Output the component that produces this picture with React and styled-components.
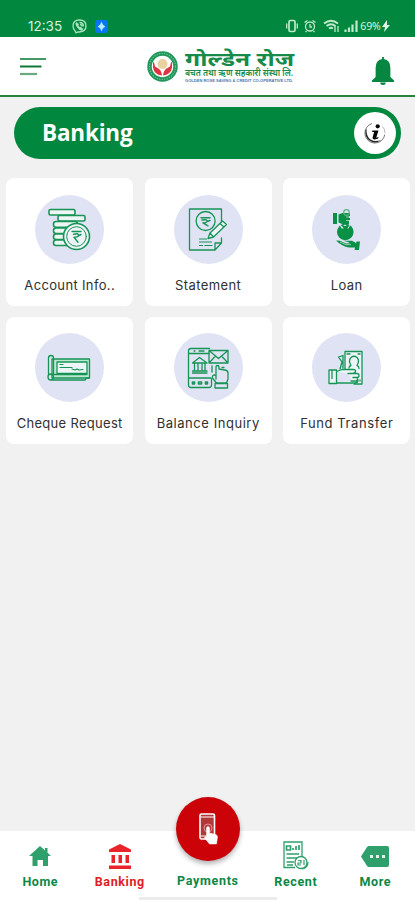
import React from 'react';
import styled, { createGlobalStyle } from 'styled-components';

const GREEN = '#02873f';
const NAV_GREEN = '#2fa06c';

const GlobalStyle = createGlobalStyle`
  * { box-sizing: border-box; }
  body { margin: 0; background: #f1f1f1; }
`;

const Screen = styled.div`
  width: 415px;
  height: 900px;
  display: flex;
  flex-direction: column;
  overflow: hidden;
  background: #f1f1f1;
  font-family: Inter, "Noto Sans", sans-serif;
`;

const StatusBar = styled.div`
  height: 37px;
  flex: none;
  display: flex;
  justify-content: space-between;
  padding: 16px 25px 0 28px;
  background: ${GREEN};
  color: #d9f3df;
`;

const StatusGroup = styled.div`
  display: flex;
  align-items: center;
  height: 20px;
  gap: ${(p) => p.$gap}px;
`;

const Clock = styled.span`
  width: 36px;
  font-size: 13.5px;
  letter-spacing: 0;
  white-space: nowrap;
`;

const Battery = styled.span`
  font-family: "Noto Sans", sans-serif;
  font-size: 10.5px;
  letter-spacing: -0.2px;
`;

const Header = styled.header`
  height: 60px;
  flex: none;
  display: flex;
  align-items: flex-start;
  background: #fff;
  border-bottom: 2px solid #2b8240;
`;

const MenuIcon = styled.svg`
  margin: 19px 0 0 20px;
`;

const Logo = styled.svg`
  margin: 11px 0 0 99px;
`;

const BellIcon = styled.svg`
  margin: 19px 0 0 73px;
`;

const TitlePill = styled.div`
  height: 52px;
  flex: none;
  margin: 10px 14px 0;
  padding: 0 5px 0 28px;
  display: flex;
  align-items: center;
  justify-content: space-between;
  border-radius: 26px;
  background: ${GREEN};
`;

const Title = styled.h1`
  margin: -2px 0 0;
  color: #fff;
  font-family: "Open Sans", sans-serif;
  font-size: 22.5px;
  font-weight: 700;
  letter-spacing: -0.2px;
`;

const InfoButton = styled.div`
  width: 42px;
  height: 42px;
  display: flex;
  align-items: center;
  justify-content: center;
  border-radius: 50%;
  background: #fff;
`;

const CardGrid = styled.main`
  flex: 1;
  display: grid;
  grid-template-columns: repeat(3, 127px);
  grid-auto-rows: 127.5px;
  gap: 11px 11.5px;
  padding: 19px 0 0 6px;
`;

const Card = styled.div`
  display: flex;
  flex-direction: column;
  align-items: center;
  padding-top: ${(p) => p.$top}px;
  border-radius: 8px;
  background: #fff;
`;

const IconDisc = styled.div`
  width: 69px;
  height: 69px;
  flex: none;
  border-radius: 50%;
  background: #e0e3f4;
`;

const CardLabel = styled.div`
  margin-top: 12.5px;
  line-height: 16px;
  color: #303030;
  font-size: 13px;
  letter-spacing: ${(p) => p.$spacing}px;
  margin-right: -${(p) => p.$spacing}px;
  white-space: nowrap;
`;

const NavBar = styled.nav`
  height: 69.5px;
  flex: none;
  display: grid;
  grid-template-columns: 80px 79px 97px 79px 80px;
  position: relative;
  background: #fff;
`;

const NavItem = styled.div`
  display: flex;
  flex-direction: column;
  align-items: center;
  padding-top: 8.5px;
  color: ${(p) => p.$color};
`;

const NavIconBox = styled.div`
  width: 32px;
  height: 34px;
  display: flex;
  align-items: center;
  justify-content: center;
`;

const NavLabel = styled.span`
  margin-top: 1px;
  line-height: 16px;
  font-family: Roboto, sans-serif;
  font-size: 12.5px;
  font-weight: 700;
  letter-spacing: ${(p) => p.$spacing || 0.5}px;
  margin-right: -${(p) => p.$spacing || 0.5}px;
  color: ${(p) => p.$color || '#0c8746'};
`;

const PayButton = styled.div`
  width: 64px;
  height: 64px;
  flex: none;
  margin-top: -42px;
  margin-bottom: 11px;
  display: flex;
  align-items: center;
  justify-content: center;
  border-radius: 50%;
  background: #cb0208;
  box-shadow: 0 3px 5px rgba(0, 0, 0, 0.3);
`;

const GestureBar = styled.div`
  position: absolute;
  left: 139px;
  bottom: 0;
  width: 138px;
  height: 3px;
  background: #ececec;
`;

const Line = ({ children, width = 1.3 }) => (
  <svg width="69" height="69" viewBox="0 0 69 69" fill="none" stroke="#169456"
    strokeWidth={width} strokeLinecap="round" strokeLinejoin="round">
    {children}
  </svg>
);

const AccountIcon = () => (
  <Line width={1.6}>
    <rect x="14" y="14.5" width="26" height="5.5" rx="1.5" fill="#eef5f5" />
    <rect x="23" y="20.5" width="27" height="5.5" rx="1.5" fill="#eef5f5" />
    <rect x="18.500" y="26.500" width="24" height="5.700" rx="2.500" fill="#eef5f5" />
    <rect x="18.500" y="33" width="18" height="5.500" rx="2.500" fill="#eef5f5" />
    <rect x="18.500" y="39" width="18" height="5.500" rx="2.500" fill="#eef5f5" />
    <rect x="18.500" y="45" width="18" height="5.500" rx="2.500" fill="#eef5f5" />
    <circle cx="41.5" cy="41.500" r="13" fill="#eef3f8" />
    <circle cx="41.500" cy="41.500" r="9.800" strokeWidth="1" />
    <path d="M37 36.500h9M38.500 39.300q5-1.500 5 1q0 2-4.500 2l4 5M44 40.500l2-1" strokeWidth="1.400" />
  </Line>
);

const StatementIcon = () => (
  <Line>
    <path d="M47.500 43v5l-6.500 7H15.500V14h32v14M41 55v-7h6.500" />
    <circle cx="31.600" cy="26" r="9.500" />
    <path d="M27 22.800h9M28 25q6-1 5 1.500q-1 1.800-4 1.300l5 3M33 26.500l3-1" strokeWidth="1.500" />
    <path d="M34 43.500l2-5.500L48.500 26l4 3.500L39.500 42zM36 38l3.500 4M46 28.500l4 3.500" fill="#eef3f8" />
    <path d="M25.500 44h7M25.500 47h12M25.500 50.500h3M31 50.500h7" strokeWidth="1.200" />
  </Line>
);

const LoanIcon = () => (
  <svg width="69" height="69" viewBox="0 0 69 69" fill="#089044">
    <path d="M21 18h4v11h-4zM26.500 19.500l4-1.500h7.500v3h-1v2h1v2h-1v4h-7l-3.500-1.500z" />
    <circle cx="34.500" cy="17.500" r="2.800" fill="none" stroke="#5bb283" strokeWidth="1.200" />
    <path d="M34 22h4M34 25.500h4" stroke="#d5ead9" strokeWidth="0.700" />
    <circle cx="33.300" cy="37" r="8.300" />
    <path d="M27.500 29.500l3 2 2.500-2 2.500 2 3-2-2 4h-7z" fill="#e0e3f4" />
    <path d="M30 31h7l-2 3h-3z" />
    <path d="M24 45.500l4 .2 6 2.800 4-.2-2-1.300-5-1.300h9l4 2.300-.5 4.500H37q-7-1-13-7zM44.500 46.500H48l-1 8.500h-4.500z" />
    <path d="M28 47l6 2.700h5" stroke="#e0e3f4" strokeWidth="0.700" fill="none" />
  </svg>
);

const ChequeIcon = () => (
  <Line>
    <path d="M17 26h37.500V45H17z" fill="#bce8d2" />
    <path d="M13.500 42V25q0-2.500 2.500-2.500t2.500 2.500v17M16 41.500h36M16 47q-3 0-3-3t3-3q2.500 0 2.500 3T16 47h34l1.500-2H54" />
    <rect x="22" y="29" width="30" height="11.500" fill="#edf5f7" />
    <path d="M25 31.500h3M25 34.500h12M37 36l3 1 2-1 2 1 4-.5" strokeWidth="1.200" />
  </Line>
);

const BalanceIcon = () => (
  <Line>
    <path d="M35.500 15.500H17q-2.500 0-2.500 2.500v34q0 2.500 2.500 2.500h18q2.500 0 2.500-2.500v-6M14.500 20.500H35M14.500 45H37M20 18h1M25 18h5" />
    <path d="M18.500 30l7-5.500 7.500 5.500zM20.500 31v6.500M24 31v6.500M28 31v6.500M31 31v6.500M18.500 38h14.500M18.500 40h14.500" />
    <path d="M18.500 49h2v2h-2zM24.500 49h3v2h-3zM31.500 49h2v2h-2z" strokeWidth="1.600" />
    <path d="M35 17.500h19V30H35zM35 17.500l9.500 8 9.500-8M35 30l6.500-7M54 30l-6.500-7" />
    <path d="M42 46V34q0-1.500 1.500-1.500T45 34v2l6 1q3 .5 3 3v6l-1.500 4h-10L38.500 45q-.5-3 2-3l1.500 1M41 50.500h12.500V55H41z" />
    <path d="M38 33v6M48 34.500h2" />
  </Line>
);

const FundIcon = () => (
  <Line>
    <path d="M33 36V18.500h17V51H42" fill="#edf4f8" />
    <path d="M31 35V22.500l-4.500 1.500 3.500 5-2 7M35 21h3M46 21h2M48 47v1" />
    <path d="M37 35q0-2 2-2.500-3-5 0-8 3-2.500 6 0 3 3 0 8 2 .5 2 3" />
    <path d="M17 37h7.500v13.500H17zM20 37.500v8M24.500 38.500L30 36.500h11q3 0 2.500 2t-3.500 2h-4M24.500 50H43q3 0 3-3M40 40.500h5q2 0 2 2t-2 2h-4M44 44.500q2 0 1.500 2T43 48h-4" fill="#edf4f8" />
  </Line>
);

const CARDS = [
  { label: 'Account Info..', Icon: AccountIcon, top: 17, spacing: 0.35 },
  { label: 'Statement', Icon: StatementIcon, top: 17, spacing: 0.4 },
  { label: 'Loan', Icon: LoanIcon, top: 17, spacing: 0.4 },
  { label: 'Cheque Request', Icon: ChequeIcon, top: 16.5, spacing: 0.3 },
  { label: 'Balance Inquiry', Icon: BalanceIcon, top: 16.5, spacing: 0.55 },
  { label: 'Fund Transfer', Icon: FundIcon, top: 16.5, spacing: 0.6 },
];

const BrandLogo = () => (
  <Logo width="151" height="38" viewBox="0 0 151 38">
    <circle cx="15.500" cy="18.500" r="13" fill="#fff" stroke="#20975a" strokeWidth="4.500" />
    <circle cx="15.500" cy="18.500" r="13" fill="none" stroke="#8bc9a5" strokeWidth="1.200" strokeDasharray="1 1.500" />
    <circle cx="15.500" cy="16" r="5" fill="#ecd1a0" />
    <path d="M6 13.500q1.500 1 2 5l3.500 2q3 2 3.500 7-8-1-9-8zM25 13.500q-1.500 1-2 5l-3.500 2q-3 2-3.500 7 8-1 9-8z" fill="#df3440" />
    <g fontFamily='"Noto Sans", "Noto Sans Devanagari", sans-serif' fill="#168b4a">
      <text x="38" y="17.500" fontSize="19" fontWeight="700" textLength="109" lengthAdjust="spacingAndGlyphs">गोल्डेन रोज</text>
      <text x="38" y="27.500" fontSize="9" fontWeight="600" textLength="108" lengthAdjust="spacingAndGlyphs">बचत तथा ऋण सहकारी संस्था लि.</text>
    </g>
    <text x="38" y="33.500" fontFamily='"Liberation Sans", sans-serif' fontSize="4.200" fontWeight="700" fill="#4b76ab" textLength="108" lengthAdjust="spacingAndGlyphs">GOLDEN ROSE SAVING &amp; CREDIT CO-OPERATIVE LTD.</text>
  </Logo>
);

export default function App() {
  return (
    <>
      <GlobalStyle />
      <Screen>
        <StatusBar>
          <StatusGroup $gap={8}>
            <Clock>12:35</Clock>
            <svg width="15" height="15" viewBox="0 0 15 15" fill="none" stroke="#a9e4bd" strokeWidth="1.3">
              <path d="M4 13.800l-1-2.100Q1 10 1 7q0-6 6.500-6T14 7q0 5.500-6.500 6H6z" />
              <path d="M4.500 4q-1 1 1 4t4 3l1-1-2-1.500-1 .5-2-2.500.700-1z" fill="#a9e4bd" />
              <path d="M7.500 3.500q4 0 4 4M8 5.500q2 0 2 2" />
            </svg>
            <svg width="13" height="13" viewBox="0 0 13 13">
              <rect width="13" height="13" rx="3" fill="#0876f4" />
              <path d="M6.500 1.500l1.300 3 2.500 2-2.500 2-1.300 3-1.300-3-2.500-2 2.500-2z" fill="#b5ecff" />
            </svg>
          </StatusGroup>
          <StatusGroup $gap={1.5}>
            <svg width="73" height="14" viewBox="0 0 73 14" fill="none" stroke="#bdebc9" strokeWidth="1.300">
              <rect x="3" y="1.500" width="6" height="11" rx="1.500" strokeWidth="1.700" />
              <path d="M.700 4.500v5M11.300 4.500v5" />
              <circle cx="24" cy="7.500" r="4.500" />
              <path d="M24 5v3h2M18.500 3.500l3-2M29.500 3.500l-3-2M20.500 12l-1 1M27.500 12l1 1" />
              <path d="M38 4.500q7-5.500 14 0M40.500 7q4.500-3.500 9 0M43 9.500q2-1.500 4 0" strokeWidth="1.900" />
              <path d="M49 13V6.500M52 7v6" />
              <path d="M59.500 13v-2.500M63 13V8.500M66.500 13V5.500M70.500 13V1.500" strokeWidth="2.200" />
            </svg>
            <Battery>69%</Battery>
            <svg width="8" height="12" viewBox="0 0 8 12" fill="#e2f8e7"><path d="M5 0L0 7h3l-1 5 6-7H5z" /></svg>
          </StatusGroup>
        </StatusBar>

        <Header>
          <MenuIcon width="28" height="22" viewBox="0 0 28 22">
            <path d="M0 3h26" stroke="#2f8e53" strokeWidth="1.800" />
            <path d="M0 10.500h21.500" stroke="#0c7934" strokeWidth="2" />
            <path d="M0 18h17" stroke="#68a97d" strokeWidth="2.200" />
          </MenuIcon>
          <BrandLogo />
          <BellIcon width="24" height="30" viewBox="0 0 26 30" preserveAspectRatio="none" fill="#078642">
            <path d="M12 1h2v2q7 1 7 9v9l4 3.500V26H1v-1.500L5 21v-9q0-8 7-9zM10 26.500h6q0 2.500-3 2.500t-3-2.500z" />
          </BellIcon>
        </Header>

        <TitlePill>
          <Title>Banking</Title>
          <InfoButton>
            <svg width="24" height="24" viewBox="0 0 24 24">
              <path d="M9 2.500a10 10 0 1 0 12.800 11" fill="none" stroke="#555" strokeWidth="0.800" />
              <path d="M2.500 9q-1 7 4 10.500 6 4.500 12-1-6 3-11 0Q3 15 3.500 8z" fill="#222" />
              <path d="M19.500 5.500Q22 8 22 12" fill="none" stroke="#999" strokeWidth="0.700" />
              <circle cx="14.700" cy="5.300" r="2.100" fill="#080808" />
              <path d="M9.500 9.500h6l-2.300 7.200 2.400-.6-.5 1.400q-6 2.500-5.500-1l1.500-5.500H9z" fill="#080808" />
            </svg>
          </InfoButton>
        </TitlePill>

        <CardGrid>
          {CARDS.map(({ label, Icon, top, spacing }) => (
            <Card key={label} $top={top}>
              <IconDisc><Icon /></IconDisc>
              <CardLabel $spacing={spacing}>{label}</CardLabel>
            </Card>
          ))}
        </CardGrid>

        <NavBar>
          <NavItem $color={NAV_GREEN}>
            <NavIconBox>
              <svg width="22" height="20" viewBox="0 0 22 20" fill="currentColor">
                <path d="M11 0l5 4.500V2h2.500v4.700L22 10h-3v10h-5v-6H8.500v6h-5V10H0z" />
              </svg>
            </NavIconBox>
            <NavLabel>Home</NavLabel>
          </NavItem>
          <NavItem $color="#e9252b">
            <NavIconBox>
              <svg width="24" height="26" viewBox="0 0 24 26" fill="currentColor">
                <path d="M12 1l11 5.500V9H1V6.500zM3.500 12H7v8H3.500zM10.500 12H14v8h-3.500zM17.500 12H21v8h-3.500zM1 22.500h22V26H1z" />
              </svg>
            </NavIconBox>
            <NavLabel $color="#df1c24" $spacing={0.6}>Banking</NavLabel>
          </NavItem>
          <NavItem>
            <PayButton>
              <svg width="28" height="34" viewBox="0 0 28 34" fill="none" stroke="#fff">
                <rect x="6" y="2" width="14.500" height="25" rx="1.500" fill="#b33639" strokeWidth="1.600" />
                <path d="M7 5h13M7 24h8" />
                <circle cx="14" cy="16" r="4" stroke="#e4979a" />
                <path d="M12.500 25v-9q0-1.500 1.500-1.500t1.500 1.500v5l6 1.500q2 .5 2 2.500l-1 7h-7l-5-6q0-2 2-1z" fill="#fff" strokeWidth="0.500" />
              </svg>
            </PayButton>
            <NavLabel $spacing={0.7}>Payments</NavLabel>
          </NavItem>
          <NavItem $color={NAV_GREEN}>
            <NavIconBox>
              <svg width="28" height="30" viewBox="0 0 28 30" fill="none" stroke="currentColor" strokeWidth="1.300">
                <path d="M13 26.500H2V1h18v15" />
                <path d="M4.500 5h4v4h-4zM11 9V7M14 9V5M17 9V4M4.500 13H17M4.500 17H15M4.500 21H12M5 24h6" strokeWidth="1.700" />
                <circle cx="19" cy="21.500" r="6" />
                <path d="M16 19.500h3v2.500h-3v2h3M22 19v5M26 21q0 6-6 7" strokeWidth="1.200" />
              </svg>
            </NavIconBox>
            <NavLabel $spacing={0.6}>Recent</NavLabel>
          </NavItem>
          <NavItem $color={NAV_GREEN}>
            <NavIconBox>
              <svg width="28" height="21" viewBox="0 0 28 21" fill="currentColor">
                <path d="M7.500 0H26q2 0 2 2v17q0 2-2 2H7.500L6 20 0 10.500 6 1z" />
                <path d="M9 9h3v3H9zM15 9h3v3h-3zM21 9h3v3h-3z" fill="#e1f6eb" />
              </svg>
            </NavIconBox>
            <NavLabel $spacing={0.6}>More</NavLabel>
          </NavItem>
          <GestureBar />
        </NavBar>
      </Screen>
    </>
  );
}
